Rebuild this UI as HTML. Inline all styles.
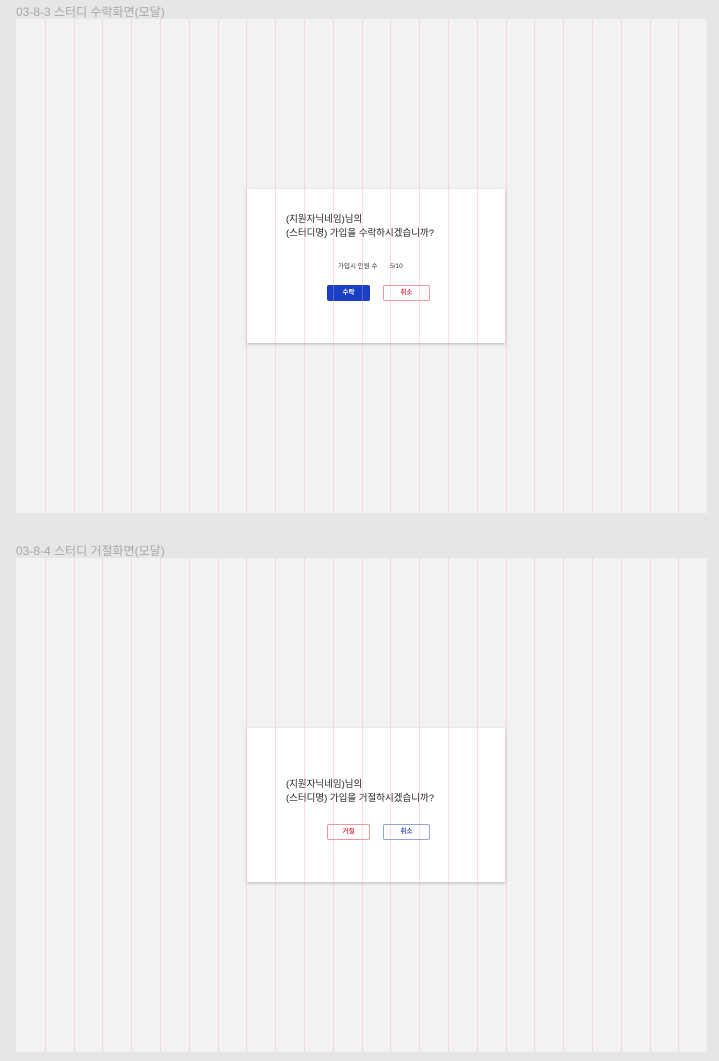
<!DOCTYPE html>
<html><head><meta charset="utf-8"><style>
*{margin:0;padding:0;box-sizing:border-box}
body{width:719px;height:1061px;background:#e6e6e6;position:relative;overflow:hidden;font-family:"Liberation Sans","Noto Sans CJK KR",sans-serif}
.lbl{position:absolute;left:16px;font-size:12px;color:#a8a8a8}
.frame{position:absolute;left:16px;width:691px;height:494px;background:#f2f2f2}
.g{position:absolute;top:0;width:1px;height:494px;background:rgba(235,165,175,.35);z-index:2}
.modal{position:absolute;left:231px;width:258px;height:154px;background:#fff;box-shadow:0 1px 3px rgba(0,0,0,.25);z-index:1}
.t{position:absolute;left:39px;font-size:9.5px;color:#222;line-height:14px}
.btn{position:absolute;width:43px;height:16px;font-size:6.5px;font-weight:bold;text-align:center;line-height:14px;border-radius:2px}
</style></head><body>
<div class="lbl" style="top:3px">03-8-3 스터디 수락화면(모달)</div>
<div class="frame" style="top:19px">
 <div class="modal" style="top:170px">
  <div class="t" style="top:24px">(지원자닉네임)님의<br>(스터디명) 가입을 수락하시겠습니까?</div>
  <div style="position:absolute;left:91px;top:71px;font-size:6.5px;color:#333">가입시 인원 수 &nbsp;&nbsp;&nbsp;&nbsp;&nbsp;&nbsp;5/10</div>
  <div class="btn" style="left:80px;top:96px;background:#1b3fc4;color:#fff;border:1px solid #1b3fc4">수락</div>
  <div class="btn" style="left:136px;top:96px;width:47px;border:1px solid #ea9aa2;color:#e04050">취소</div>
 </div>
 <div class="g" style="left:29px"></div><div class="g" style="left:58px"></div><div class="g" style="left:86px"></div><div class="g" style="left:115px"></div><div class="g" style="left:144px"></div><div class="g" style="left:173px"></div><div class="g" style="left:202px"></div><div class="g" style="left:230px"></div><div class="g" style="left:259px"></div><div class="g" style="left:288px"></div><div class="g" style="left:317px"></div><div class="g" style="left:346px"></div><div class="g" style="left:374px"></div><div class="g" style="left:403px"></div><div class="g" style="left:432px"></div><div class="g" style="left:461px"></div><div class="g" style="left:490px"></div><div class="g" style="left:518px"></div><div class="g" style="left:547px"></div><div class="g" style="left:576px"></div><div class="g" style="left:605px"></div><div class="g" style="left:634px"></div><div class="g" style="left:662px"></div>
</div>
<div class="lbl" style="top:542px">03-8-4 스터디 거절화면(모달)</div>
<div class="frame" style="top:558px">
 <div class="modal" style="top:170px">
  <div class="t" style="top:50px">(지원자닉네임)님의<br>(스터디명) 가입을 거절하시겠습니까?</div>
  <div class="btn" style="left:80px;top:96px;border:1px solid #ea9aa2;color:#e04050">거절</div>
  <div class="btn" style="left:136px;top:96px;width:47px;border:1px solid #95a3d8;color:#3a55c0">취소</div>
 </div>
 <div class="g" style="left:29px"></div><div class="g" style="left:58px"></div><div class="g" style="left:86px"></div><div class="g" style="left:115px"></div><div class="g" style="left:144px"></div><div class="g" style="left:173px"></div><div class="g" style="left:202px"></div><div class="g" style="left:230px"></div><div class="g" style="left:259px"></div><div class="g" style="left:288px"></div><div class="g" style="left:317px"></div><div class="g" style="left:346px"></div><div class="g" style="left:374px"></div><div class="g" style="left:403px"></div><div class="g" style="left:432px"></div><div class="g" style="left:461px"></div><div class="g" style="left:490px"></div><div class="g" style="left:518px"></div><div class="g" style="left:547px"></div><div class="g" style="left:576px"></div><div class="g" style="left:605px"></div><div class="g" style="left:634px"></div><div class="g" style="left:662px"></div>
</div>
</body></html>
